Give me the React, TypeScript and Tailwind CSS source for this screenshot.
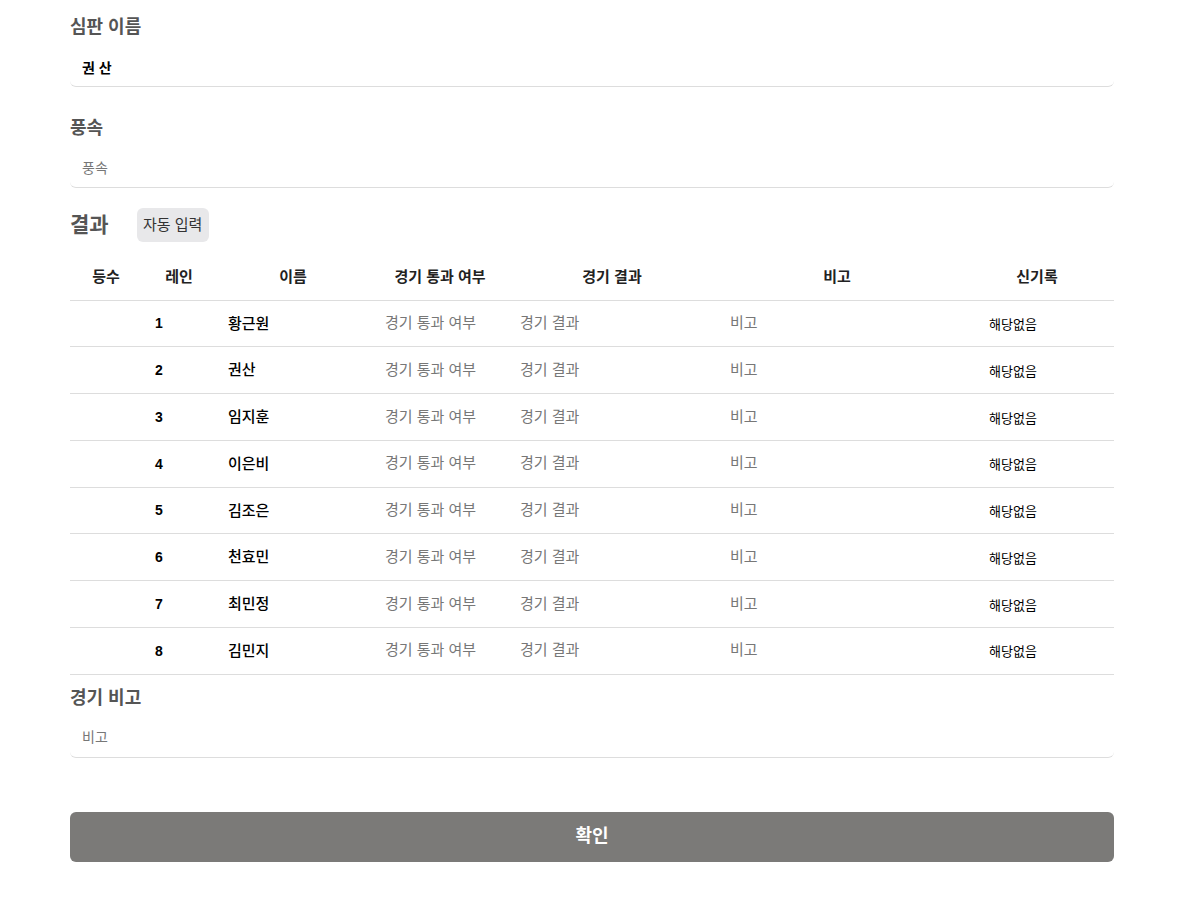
import React from 'react';

const players = ['황근원', '권산', '임지훈', '이은비', '김조은', '천효민', '최민정', '김민지'];

const font = { fontFamily: '"Liberation Sans", "Noto Sans CJK KR", sans-serif' };

function Field({ label, value, placeholder }: { label: string; value?: string; placeholder: string }) {
    return (
        <div>
            <div className="h-[27px] leading-[27px] text-[18px] font-bold text-[#555]">{label}</div>
            <input
                readOnly
                value={value}
                placeholder={placeholder}
                className="mt-[6px] block h-[40px] w-full rounded-md border-b border-[#ddd] px-3 text-[14px] font-bold text-black outline-none placeholder:font-normal placeholder:text-[#777]"
            />
        </div>
    );
}

export default function App() {
    return (
        <div className="min-h-[917px] bg-white" style={font}>
            <div className="ml-[70px] w-[1044px] pt-[14px]">
                <Field label="심판 이름" value="권 산" placeholder="심판 이름" />
                <div className="mt-[28px]">
                    <Field label="풍속" placeholder="풍속" />
                </div>

                <div className="mt-[20px] flex h-[34px] items-center gap-[28px]">
                    <h2 className="text-[21px] font-bold text-[#555]">결과</h2>
                    <button className="h-[34px] w-[72px] rounded-md bg-[#e8e8ea] text-[15px] text-[#333]">
                        자동 입력
                    </button>
                </div>

                <table className="mt-[13px] w-full table-fixed border-collapse">
                    <colgroup>
                        <col className="w-[72px]" />
                        <col className="w-[74px]" />
                        <col className="w-[154px]" />
                        <col className="w-[140px]" />
                        <col className="w-[204px]" />
                        <col className="w-[246px]" />
                        <col className="w-[154px]" />
                    </colgroup>
                    <thead>
                        <tr className="h-[45px] border-b border-[#ddd] text-[15px] font-bold text-[#222]">
                            <th className="text-center">등수</th>
                            <th className="text-center">레인</th>
                            <th className="text-center">이름</th>
                            <th className="text-center">경기 통과 여부</th>
                            <th className="text-center">경기 결과</th>
                            <th className="text-center">비고</th>
                            <th className="text-center">신기록</th>
                        </tr>
                    </thead>
                    <tbody>
                        {players.map((name, i) => (
                            <tr key={name} className="h-[46.75px] border-b border-[#ddd]">
                                <td></td>
                                <td className="pl-[13px] pt-[1px] text-[14px] font-bold text-black">{i + 1}</td>
                                <td className="pl-[12px] pt-[1px] text-[15px] font-medium text-black">{name}</td>
                                <td className="pl-[15px] text-[15px] text-[#777]">경기 통과 여부</td>
                                <td className="pl-[10px] text-[15px] text-[#777]">경기 결과</td>
                                <td className="pl-[16px] text-[15px] text-[#777]">비고</td>
                                <td className="pl-[29px] pt-[3px] text-[13px] text-black">해당없음</td>
                            </tr>
                        ))}
                    </tbody>
                </table>

                <div className="mt-[10px]">
                    <Field label="경기 비고" placeholder="비고" />
                </div>

                <button className="mt-[54px] h-[50px] w-full rounded-md bg-[#7b7a78] text-[18px] font-bold text-white">
                    확인
                </button>
            </div>
        </div>
    );
}
